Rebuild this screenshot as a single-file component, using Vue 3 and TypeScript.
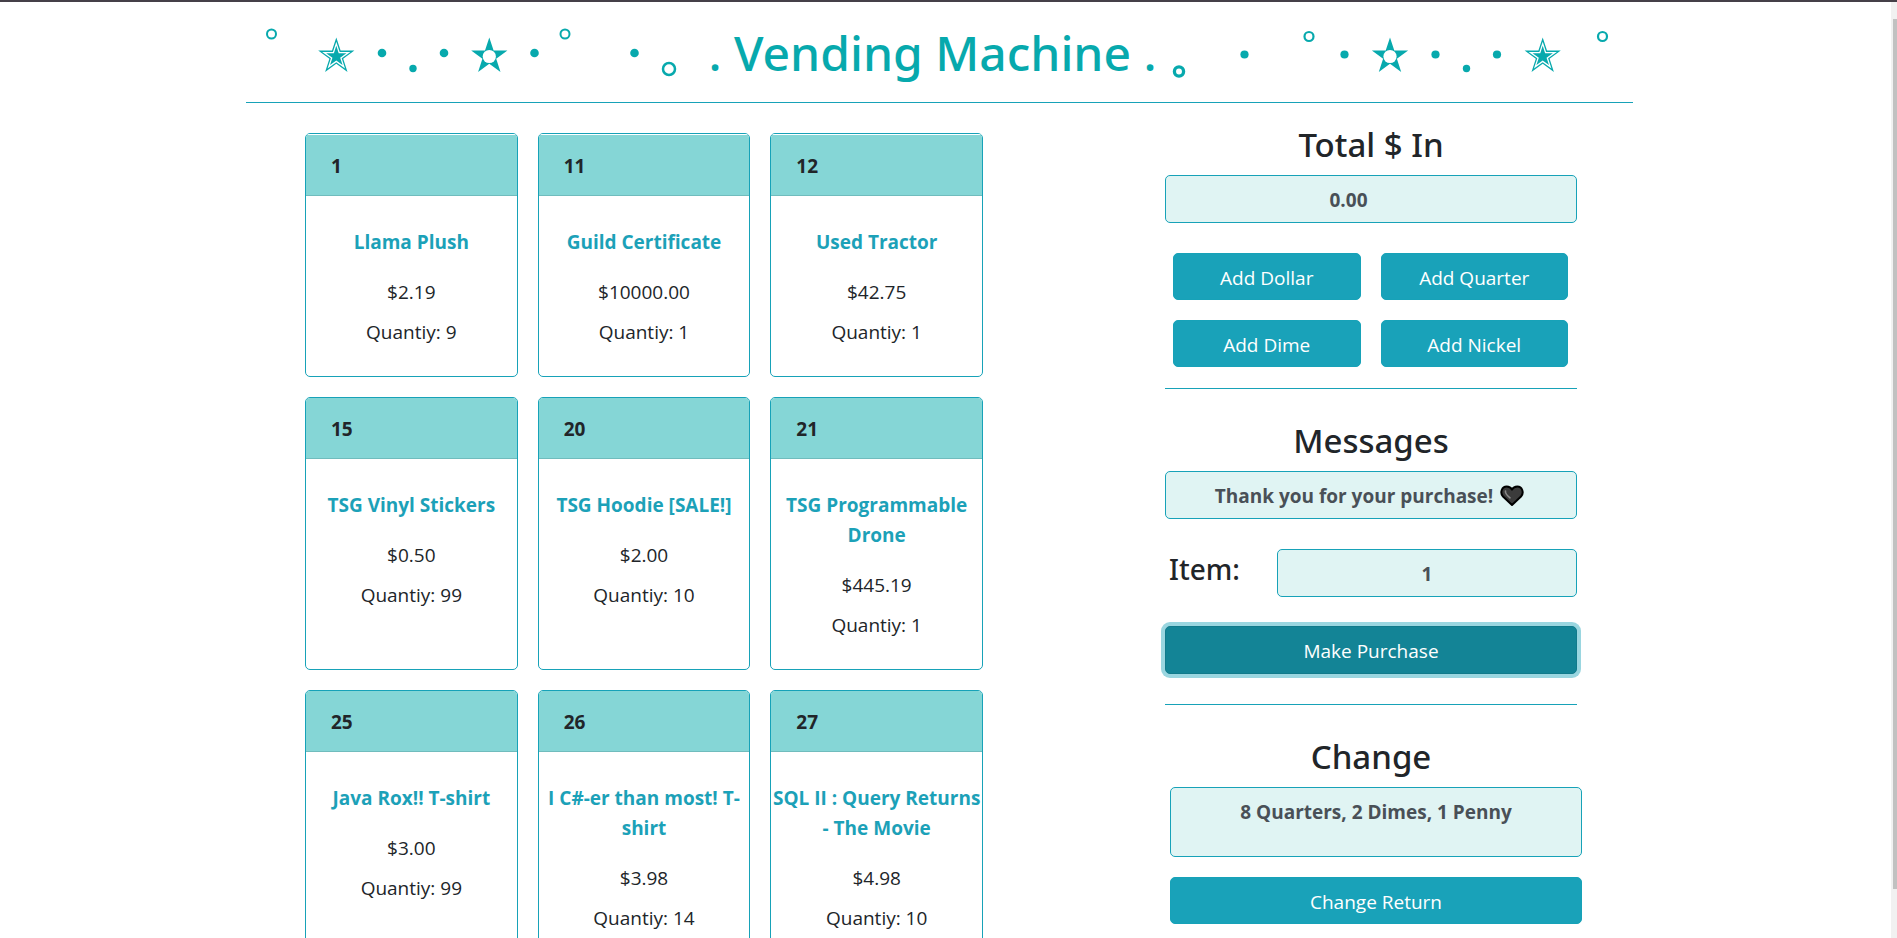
<script setup lang="ts">
import { ref } from 'vue'

interface Item {
  id: number
  name: string
  price: string
  quantity: number
}

interface Dot {
  x: number
  y: number
  r: number
  ring?: number
}

const items: Item[] = [
  { id: 1, name: 'Llama Plush', price: '2.19', quantity: 9 },
  { id: 11, name: 'Guild Certificate', price: '10000.00', quantity: 1 },
  { id: 12, name: 'Used Tractor', price: '42.75', quantity: 1 },
  { id: 15, name: 'TSG Vinyl Stickers', price: '0.50', quantity: 99 },
  { id: 20, name: 'TSG Hoodie [SALE!]', price: '2.00', quantity: 10 },
  { id: 21, name: 'TSG Programmable Drone', price: '445.19', quantity: 1 },
  { id: 25, name: 'Java Rox!! T-shirt', price: '3.00', quantity: 99 },
  { id: 26, name: 'I C#-er than most! T-shirt', price: '3.98', quantity: 14 },
  { id: 27, name: 'SQL II : Query Returns - The Movie', price: '4.98', quantity: 10 },
]

const coins = [
  { label: 'Add Dollar', cents: 100 },
  { label: 'Add Quarter', cents: 25 },
  { label: 'Add Dime', cents: 10 },
  { label: 'Add Nickel', cents: 5 },
]

const star =
  'M0-19L4.3-5.9H18.1L6.9 2.2L11.2 15.4L0 7.3L-11.2 15.4L-6.9 2.2L-18.1-5.9H-4.3Z'

const leftDots: Dot[] = [
  { x: 25.5, y: 32, r: 4.5, ring: 2 },
  { x: 136, y: 51, r: 4.3 },
  { x: 167, y: 66.5, r: 3.7 },
  { x: 198, y: 51, r: 4.3 },
  { x: 288.5, y: 51, r: 4.3 },
  { x: 319, y: 32, r: 4.5, ring: 2 },
  { x: 388.5, y: 51, r: 4.3 },
  { x: 423, y: 67, r: 6, ring: 2.5 },
]

const rightDots: Dot[] = [
  { x: 14, y: 69.5, r: 4.6, ring: 3.3 },
  { x: 79.5, y: 52.5, r: 4.1 },
  { x: 144, y: 34.5, r: 4.5, ring: 2.2 },
  { x: 179.5, y: 52.5, r: 4.1 },
  { x: 270.5, y: 52.5, r: 4.1 },
  { x: 301.5, y: 66.5, r: 3.7 },
  { x: 332, y: 52.5, r: 4.1 },
  { x: 437.5, y: 34.5, r: 4.5, ring: 2.2 },
]

const cents = ref(0)
const total = ref('0.00')
const message = ref('Thank you for your purchase!')
const selected = ref('1')
const change = ref('8 Quarters, 2 Dimes, 1 Penny')

function addCoin(value: number) {
  cents.value += value
  total.value = (cents.value / 100).toFixed(2)
}

function returnChange() {
  cents.value = 0
  total.value = '0.00'
  change.value = ''
}
</script>

<template>
  <div class="shell">
    <div class="topline"></div>
    <div class="viewport">
      <div class="page">
        <header class="banner">
          <svg class="trail" width="454" height="100" viewBox="0 0 454 100" aria-hidden="true">
            <circle
              v-for="(d, i) in leftDots" :key="i" :cx="d.x" :cy="d.y" :r="d.r"
              :class="d.ring ? 'ring' : 'dot'" :stroke-width="d.ring ?? 0"
            />
            <g transform="translate(90.3 54.5)">
              <path class="dot" :d="star" />
              <path class="blank" :d="star" transform="scale(.78)" />
              <path class="dot" :d="star" transform="scale(.56)" />
            </g>
            <g transform="translate(243.3 54.5)">
              <path class="dot" :d="star" />
              <circle class="blank" r="6.6" />
            </g>
          </svg>
          <h1>. Vending Machine .</h1>
          <svg class="trail" width="468" height="100" viewBox="0 0 468 100" aria-hidden="true">
            <circle
              v-for="(d, i) in rightDots" :key="i" :cx="d.x" :cy="d.y" :r="d.r"
              :class="d.ring ? 'ring' : 'dot'" :stroke-width="d.ring ?? 0"
            />
            <g transform="translate(225 54.5)">
              <path class="dot" :d="star" />
              <circle class="blank" r="6.6" />
            </g>
            <g transform="translate(377.7 54.5)">
              <path class="dot" :d="star" />
              <path class="blank" :d="star" transform="scale(.78)" />
              <path class="dot" :d="star" transform="scale(.56)" />
            </g>
          </svg>
        </header>

        <main class="columns">
          <section class="items" aria-label="Items">
            <article v-for="item in items" :key="item.id" class="card" @click="selected = String(item.id)">
              <div class="card-head">{{ item.id }}</div>
              <div class="card-body">
                <h2 class="name">{{ item.name }}</h2>
                <p>${{ item.price }}</p>
                <p>Quantiy: {{ item.quantity }}</p>
              </div>
            </article>
          </section>

          <form class="panel" @submit.prevent>
            <section class="group">
              <label class="heading" for="total">Total $ In</label>
              <input id="total" v-model="total" class="field total" type="text" readonly />
              <div class="coins">
                <button v-for="c in coins" :key="c.label" class="btn" type="button" @click="addCoin(c.cents)">
                  {{ c.label }}
                </button>
              </div>
            </section>
            <hr />
            <section class="group">
              <label class="heading" for="message">Messages</label>
              <div class="message">
                <input id="message" v-model="message" class="field note" type="text" readonly />
                <svg class="heart" width="24" height="22" viewBox="0 0 24 22" aria-hidden="true">
                  <path
                    d="M12 20L3 11.5C-.5 7.5 2 1.5 6.7 1.5C9 1.5 11 2.7 12 4.6C13 2.7 15 1.5 17.3 1.5C22 1.5 24.5 7.5 21 11.5Z"
                    fill="#3b3b3b" stroke="#000" stroke-width="2" stroke-linejoin="round"
                  />
                  <path d="M5.5 6C5 8.5 7 10.5 10 12.8" fill="none" stroke="#8a8a8a" stroke-width="1.6" stroke-linecap="round" />
                </svg>
              </div>
              <div class="pick">
                <label for="item">Item:</label>
                <input id="item" v-model="selected" class="field" type="text" />
              </div>
              <button class="btn active" type="submit">Make Purchase</button>
            </section>
            <hr class="second" />
            <section class="group">
              <label class="heading" for="change">Change</label>
              <div class="shifted">
                <textarea id="change" v-model="change" class="field change" readonly></textarea>
                <button class="btn" type="button" @click="returnChange">Change Return</button>
              </div>
            </section>
          </form>
        </main>
      </div>
      <div class="rail" aria-hidden="true"><div class="thumb"></div></div>
    </div>
  </div>
</template>

<style>
body {
  margin: 0;
  background: #fff;
}
</style>

<style scoped>
.shell,
.shell * {
  box-sizing: border-box;
}
.shell {
  display: flex;
  flex-direction: column;
  height: 100vh;
  overflow: hidden;
  color: #212529;
  font-family: 'Open Sans', 'Noto Sans', sans-serif;
  font-size: 19px;
  line-height: 30px;
}
.topline {
  flex: none;
  height: 2px;
  background: #454048;
}
.viewport {
  display: flex;
  flex: 1;
  min-height: 0;
}
.page {
  flex: 1;
  min-width: 0;
  padding-right: 12px;
  overflow: hidden;
}
.rail {
  flex: none;
  width: 6px;
  padding: 17px 0 49px 2px;
  background: #f1f1f1;
}
.thumb {
  height: 100%;
  background: #c1c1c1;
}
.banner {
  display: flex;
  justify-content: space-between;
  max-width: 1387px;
  height: 101px;
  margin: 0 auto;
  border-bottom: 1px solid #17a2b8;
}
.trail {
  flex: none;
}
.dot {
  fill: #07a9ad;
}
.ring {
  fill: none;
  stroke: #07a9ad;
}
.blank {
  fill: #fff;
}
h1 {
  margin: 0;
  color: #07a9ad;
  font-family: 'Noto Sans', 'Open Sans', sans-serif;
  font-size: 48px;
  font-weight: 500;
  line-height: 102px;
  white-space: nowrap;
}
.columns {
  display: grid;
  grid-template-columns: 678fr 412fr;
  column-gap: 182px;
  align-items: start;
  max-width: 1387px;
  margin: 0 auto;
  padding: 30px 56px 0 59px;
}
.items {
  display: grid;
  grid-template-columns: repeat(3, minmax(0, 1fr));
  gap: 20px;
}
.card {
  border: 1px solid #17a2b8;
  border-radius: 5px;
  background: #fff;
  overflow: hidden;
}
.card-head {
  padding: 16px 25px 14px;
  border-bottom: 1px solid #70bcbd;
  background: #85d6d6;
  font-weight: 700;
}
.card:nth-child(-n + 3) .card-head {
  padding-top: 17px;
  box-shadow: inset 0 1px #fff;
}
.card-body {
  padding: 31px 0 19px;
  text-align: center;
}
.name {
  margin: 0 0 20px;
  color: #1ca1b8;
  font-size: 19px;
  font-weight: 700;
  line-height: 30px;
}
.card-body p {
  margin: 0 0 10px;
}
.group {
  display: flex;
  flex-direction: column;
}
.heading {
  margin-bottom: 10px;
  font-family: 'Noto Sans', 'Open Sans', sans-serif;
  font-size: 33px;
  font-weight: 500;
  line-height: 40px;
  text-align: center;
}
.panel {
  margin-top: -8px;
}
.field {
  display: block;
  width: 100%;
  min-width: 0;
  height: 48px;
  padding: 9px 15px 7px;
  border: 1px solid #17a2b8;
  border-radius: 5px;
  outline: none;
  background: #e0f4f3;
  color: #495057;
  font: inherit;
  font-weight: 700;
  text-align: center;
}
.total {
  padding-right: 60px;
}
.coins {
  display: grid;
  grid-template-columns: 1fr 1fr;
  gap: 20px;
  padding: 30px 9px 0 8px;
}
.btn {
  width: 100%;
  height: 47px;
  padding: 2px 0 0;
  border: 1px solid #17a2b8;
  border-radius: 5px;
  background: #19a2b9;
  color: #fff;
  font: inherit;
  cursor: pointer;
}
.active {
  height: 48px;
  border-color: #117a8b;
  background: #138496;
  box-shadow: 0 0 0 4px #9ad6e0;
}
hr {
  height: 1px;
  margin: 21px 0 32px;
  border: 0;
  background: #17a2b8;
}
.second {
  margin-top: 30px;
}
.message {
  position: relative;
}
.note {
  padding-right: 49px;
}
.heart {
  position: absolute;
  top: 14px;
  left: calc(50% + 129px);
}
.pick {
  display: grid;
  grid-template-columns: 112px 1fr;
  margin: 30px 0 29px;
}
.pick label {
  padding-left: 4px;
  font-family: 'Noto Sans', 'Open Sans', sans-serif;
  font-size: 28px;
  font-weight: 500;
  line-height: 40px;
}
.shifted {
  display: grid;
  gap: 20px;
  margin: 0 -5px 0 5px;
}
.change {
  height: 70px;
  resize: none;
}
</style>
